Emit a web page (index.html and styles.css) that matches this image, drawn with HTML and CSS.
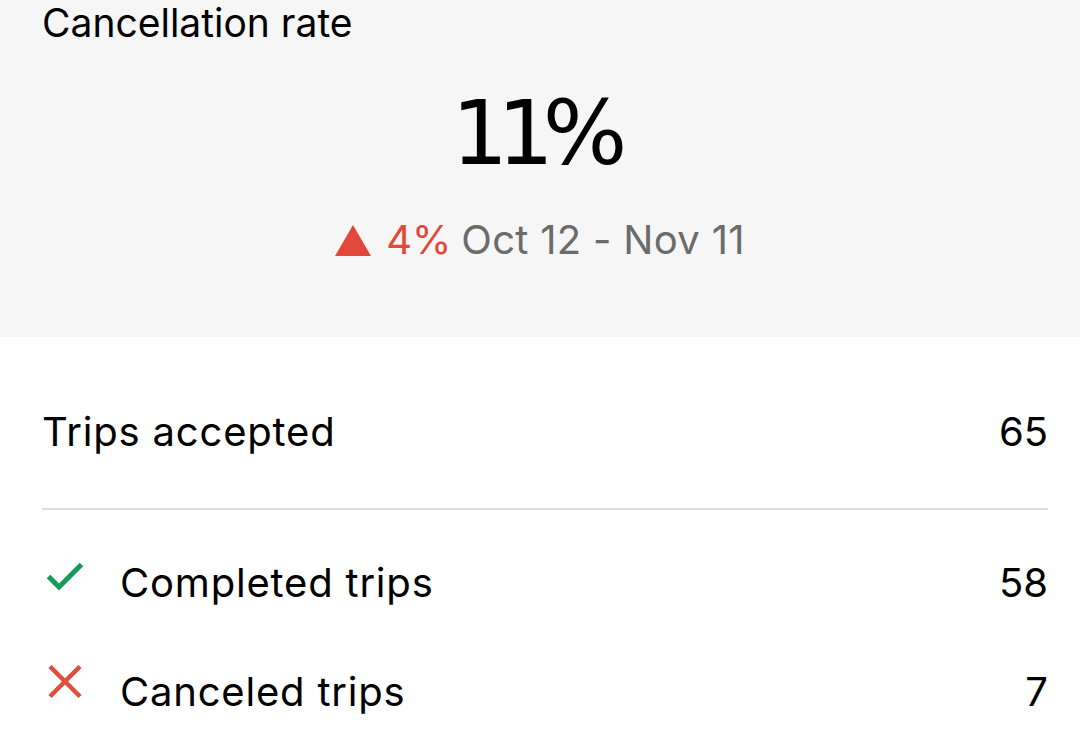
FILE: index.html
```html
<!DOCTYPE html>
<html lang="en">
<head>
<meta charset="utf-8">
<title>Cancellation rate</title>
<link rel="stylesheet" href="styles.css">
</head>
<body>
  <section class="summary">
    <h1 class="summary-title">Cancellation rate</h1>
    <div class="rate">11%</div>
    <div class="delta">
      <svg class="delta-arrow" width="36" height="31" viewBox="0 0 36 31" aria-hidden="true">
        <polygon points="18,0 36,31 0,31" fill="#e0493a"/>
      </svg>
      <span class="delta-value">4%</span>
      <span class="delta-period">Oct 12 - Nov 11</span>
    </div>
  </section>

  <section class="trips">
    <div class="trip-row trip-total">
      <span class="trip-label">Trips accepted</span>
      <span class="trip-count">65</span>
    </div>
    <div class="trip-row trip-detail">
      <span class="trip-icon icon-check">
        <svg width="38" height="30" viewBox="0 0 38 30" aria-hidden="true">
          <path d="M2.5 15.5 L13 26 L35.5 3.5" fill="none" stroke="#179a5a" stroke-width="5"/>
        </svg>
      </span>
      <span class="trip-label">Completed trips</span>
      <span class="trip-count">58</span>
    </div>
    <div class="trip-row trip-detail">
      <span class="trip-icon icon-cross">
        <svg width="38" height="34" viewBox="0 0 38 34" aria-hidden="true">
          <path d="M4 1.5 L34 31.5 M34 1.5 L4 31.5" fill="none" stroke="#df4f3e" stroke-width="4.5"/>
        </svg>
      </span>
      <span class="trip-label">Canceled trips</span>
      <span class="trip-count">7</span>
    </div>
  </section>
</body>
</html>
```

FILE: styles.css
```css
* {
  box-sizing: border-box;
}

html,
body {
  margin: 0;
  padding: 0;
  background: #ffffff;
}

body {
  width: 1080px;
  height: 737px;
  overflow: hidden;
  font-family: Inter, "Noto Sans", sans-serif;
  color: #000000;
}

/* Headline block */
.summary {
  height: 337px;
  background: #f6f6f6;
  padding: 0 42px;
  display: flex;
  flex-direction: column;
}

.summary-title {
  margin: 0;
  font-size: 39px;
  line-height: 45px;
  font-weight: 400;
}

.rate {
  margin-top: 38px;
  align-self: center;
  font-family: "DejaVu Sans", sans-serif;
  font-size: 89px;
  line-height: 100px;
  letter-spacing: -11px;
  font-weight: 400;
  padding-right: 12px;
}

.delta {
  margin-top: 33px;
  align-self: center;
  display: flex;
  align-items: center;
  font-size: 40px;
  line-height: 48px;
}

.delta-arrow {
  display: block;
  margin-right: 15px;
}

.delta-value {
  color: #df4a39;
  margin-right: 10px;
}

.delta-period {
  color: #6b6b6b;
  letter-spacing: 0.3px;
}

/* Trip breakdown */
.trips {
  padding: 71px 32px 0 42px;
}

.trip-row {
  display: flex;
  align-items: center;
  font-size: 40px;
  line-height: 48px;
  letter-spacing: 0.8px;
}

.trip-total {
  padding-bottom: 52px;
  border-bottom: 2px solid #dcdcdc;
  margin-bottom: 18px;
}

.trip-detail {
  height: 109px;
}

.trip-icon {
  width: 78px;
  display: flex;
  align-items: center;
  padding-left: 4px;
}

.trip-icon svg {
  display: block;
}

.icon-check svg {
  margin-bottom: 14px;
}

.icon-cross svg {
  margin-bottom: 20px;
}

.trip-label {
  flex: 1;
}

.trip-count {
  text-align: right;
  letter-spacing: 0;
}
```
